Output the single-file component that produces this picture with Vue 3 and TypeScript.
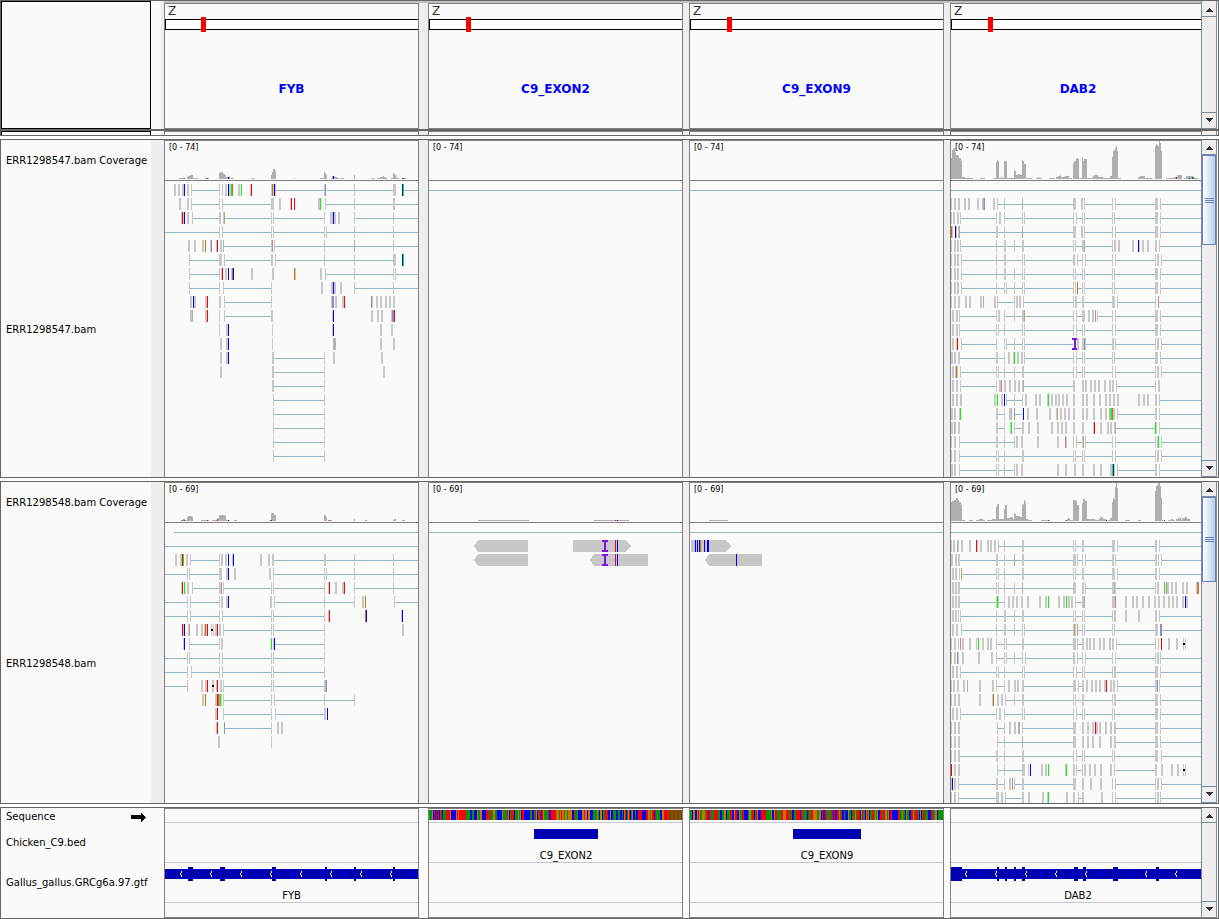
<script setup lang="ts">
interface Shape { d: string; fill: string }
interface AlignmentTrack { coverage: string; reads: string[] }
interface Sample { name: string; range: string; height: number; thumb: string; tracks: AlignmentTrack[] }
interface Gene { exons: string; white: number[]; blue: number[] }
interface Locus { name: string; width: number; marker: number; seed: number; bed?: [number, number]; gene?: Gene }

const palette: Record<string, string> = {
  r: '#ff0000', b: '#0000ff', g: '#00ff00', G: '#009600', o: '#d17105',
  R: '#d08484', p: '#8c8cc8', O: '#c4a27c', e: '#a4c0a4', E: '#8ccc8c', d: '#b0b0b0', k: '#000000',
}

const loci: Locus[] = [
  { name: 'FYB', width: 253, marker: 36, seed: 0,
    gene: { exons: '23.5 55.5 107.4 160.2 189.2 228.2', white: [15, 45, 75, 105, 135, 165, 195, 225], blue: [0, 127, 157, 178, 206, 246] } },
  { name: 'C9_EXON2', width: 253, marker: 37, seed: 7, bed: [105, 64] },
  { name: 'C9_EXON9', width: 253, marker: 37, seed: 23, bed: [103, 68] },
  { name: 'DAB2', width: 250, marker: 37, seed: 0,
    gene: { exons: '0.11 46.2 54.2 63.2 71.3 123.4 132.3 162.5 205.3', white: [14, 44, 74, 104, 134, 194, 224], blue: [26, 89, 120, 151, 182] } },
]

const blank: AlignmentTrack = { coverage: '', reads: ['0~253'] }
const spliced = '108 109~159 159'
const through = '54 57 58~106 106 108 109~159 159'

const samples: Sample[] = [
  {
    name: 'ERR1298547.bam', range: '[0 - 74]', height: 296, thumb: 'long',
    tracks: [
      {
        coverage: '14.6.1 19.1.1G 22.1.2 23.2.3 25.3.4 28.5.1 40.4.1 42.1.1r 54.1.6 55.3.7 58.2.5 60.1.4 61.4.2 63.1.2b 65.3.1 67.1.1o 86.4.1 106.1.4 107.1.7 108.2.10 110.1.8 129.1.1 155.4.1 159.1.7 160.1.6 161.1.4 166.1.1 167.3.3 170.2.2 168.1.3b 172.2.1 175.4.1 189.1.4 206.4.1 212.3.1 215.3.2 218.1.3 219.2.2 221.1.1 226.2.1 228.1.6 229.1.5 230.1.4 231.1.2 232.2.1 237.4.1 237.1.1b 238.1.1G',
        reads: [
          '9.2 13.2 17.2 19b 22.2 26 27~54 54 57 60.2 63b 64.2 66g 67o 73.2 76g 85 86r 106 107o 108 109b 110 111~159 159 160p 161~189 189 190~228 228.3 237b 238g 239~253',
          '14.2 22.2 26 27~54 54 57 58~106 106.3 114.2 125 126r 129r 153.2 155g 160 161~189 189 190~228 228.2 230~253',
          '16 17r 18 19b 22.2 27 28~54 54.2 58 59O 60~106 106 108 109~159 159 165.2 167 168b 169.2 173.2 189 190~228 228 229~253',
          '0~54 54 57 58~106 106 108 109~159 159 161 162~189 189 190~228 228 229~253',
          '23.2 29.2 37.2 40o 45 46p 51 52r 55.2 58e 59~106 106 107R 109 110~159 159 160~189 189d 190~228 228 229~253',
          '24 25~54 54.3 59 60~106 106.2 110 111~159 159 160~189 189 190~228 228.3 237b 238g',
          '24 25~54 54 56 57r 60.2 63b 66 67o 68b 86.2 107.2 129o 130 155.2 160 161~189 189 190~228 228 230 231~253',
          '24 25~54 54 58 59~106 106 156.2 166.2 168b 169.2 175.2 189 190~228 228 229~253',
          '25.2 28b 29.2 40.2 42r 54.2 59 60~106 106 166 167.2p 170.2 177.2 179r 206p 207 211.2 215.2 220.2 224.2 228.2',
          '25.2 27d 40.2 42r 54 59 60~106 106.2 167 168b 206.2 212.2 216.2 226 227.2p 229r',
          '54 61.2 63b 107 167 168b 215.2 226.2',
          '55.2 61.2 63b 107 168d 169.2e 215.2 228.2',
          '55.2 61.2 63b 107.2 109~159 159 168.2 216.2',
          '55.2 107.2 109~159 159 218.2',
          '107.2 109~159 159',
          spliced, spliced, spliced, spliced, spliced,
        ],
      },
      blank,
      blank,
      {
        coverage: '0.1.21 1.1.29 2.2.31 4.1.27 5.2.24 7.1.23 8.2.21 10.1.18 11.3.2 14.8.1 29.5.1 43.2.1 45.1.17 46.1.19 47.1.18 48.2.1 50.1.2 51.2.1 53.3.18 56.7.1 60.1.1o 63.1.9 64.1.8 65.2.4 67.2.5 69.2.4 71.1.19 72.1.18 73.2.15 76.5.1 85.6.1 87.1.2 98.6.1 105.2.2 107.2.3 109.1.4 110.4.2 114.4.3 118.3.1 122.1.16 123.2.18 125.2.21 127.1.20 128.3.1 131.1.22 132.1.18 133.3.20 136.6.1 142.1.3 143.4.4 147.5.2 152.7.1 159.2.3 161.1.22 162.1.28 163.1.29 164.1.31 165.1.33 166.1.28 167.3.1 187.2.2 189.5.3 194.7.1 196.1.1o 204.1.33 205.1.35 206.1.34 207.1.33 208.1.38 209.1.36 210.1.28 215.8.1 223.3.2 225.1.2r 226.5.4 233.2.1 235.7.3 238.1.1b 241.2.2G 243.4.1',
        reads: [
          '0~250',
          '0 3.2 7.2 13.2 17.2 26.2 31 32d 33p 42.2 46 47~122 53 71d 122.3 130.2 133 134~161 161 164 165~204 204.3 209 210~250',
          '0 2.2 6.2 9 10~45 45 48.2 53 54~71 71 73 74~122 122 125 126~131 131 133 134~161 161 163 164~204 204.3 209 210~250',
          '0o 1 4b 5 7 8O 9~45 45.2 47~122 53 71d 122.3 130.2 133 134~161 161 164 165~204 204.3 209 210~250',
          '0 3.2 6.2 9 10~45 45 46~53 53.2 55~71 63 71.2 73~122 122 124 125~131 131.2 133d 134~161 161 163.2 167.2 181.2 187b 188 191.2 196.2 204.2 208 209~250',
          '0 3.2 6.2 10 11~45 45 46~53 53.2 55~71 71 73 74~122 122.2 126 127~131 131 134 135~161 161 164 165~204 204 206.2 210 211~250',
          '0 3.2 6.2 10 11~45 45 46~53 53.2 55~71 63 71 73 74~122 122 124 125~131 131 133 134~161 161 163 164~204 204.3 209 210~250',
          '0 3.2 6.2 10 11~45 45 46~53 53 55 56~71 63 71 73 74~122 122 124 126o 127~131 131 133 134~161 161 163 164~204 204.3 209 210~250',
          '0 3.2 7.2 14.2 18.2 29.2 32d 43.2 46 47~63 63 65.2 68.2 72 73~122 122 124.2 126~131 131.2 133~161 161.3 166 167~204 204 207R 208~250',
          '1.2 5.2 8 9~45 45 47.2 53 54~71 63 71.2 73O 74~122 122 125 126~131 131.3 137.2 141.2 144R 146 147~161 161 164 165~204 204.3 209 210~250',
          '1.2 5.2 8 9~45 45 47 48~53 53 54~71 71 73 74~122 122 125 126~131 131 133 134~161 161 164 165~204 204.3 209 210~250',
          '1.2 5 6r 10 11~45 45 53 55 56~71 63 71 73 74~122 121I 126.2 131.2 133p 134 135~161 161.2 164 165~204 204 206.2 210 211~250',
          '0.2 3.2 7.2 9~45 45.2 47~53 53 57.2 62 63g 66.2 70.2 73 74~122 122 125 126~131 131 133 134~161 161 163 164~204 204.3 209 210~250',
          '1.2 4 5o 6 9 10~45 45 47 48~53 53 54~71 63 71.2 73~122 122 125 126~131 131 133 134~161 161 164 165~204 204 206.2 210 211~250',
          '1.2 5.2 9 10~45 45 48.2 50R 53.2 58.2 63.2 67.2 71 72d 73~122 122.2 131.2 134.2 139.2 143.2 147.2 153.2 158.2 161.2 165 166~204 204 207.2',
          '1.2 5.2 9.2 43.2 46g 50.2 53b 55 56~71 63 71 74.2 84.2 88.2 96 97g 100.2 104.2 107.2 111.2 115.2 122.2 131.2 135.2 142.2 148.2 154.2 158.2 162.2 166.2 187.2 192.2 196.2 204.2 208 209~250',
          '0.2 3.2 8 9g 45.2 47~53 53 58.2 60d 63p 64~71 72b 76.2 85.2 98.2 105 106O 109.2 113.2 117.2 122.2 131.2 135.2 142.2 149.2 154.2 158.2e 160g 161o 162.2 166 167~204 204.2 208 209~250',
          '0.2 3d 4 7.2 45.2 47~53 53 59 60g 63 64~71 71.2 77.2 86.2 100.2 106.2 110.2 114.2 122.2 131.2 142 143r 149.2 156.2 159.2 163 164d 165~204 204g 205 208 209~250',
          '0 3.2 8 9~45 45.2 47~53 53 54~63 63 65.2 70.2 86.2 106.2 114R 115 122 125 126~131 131 132O 134 135~161 161 164 165~204 204 206 207g 210 211~250',
          '0 3.2 8 9~45 45 47 48~53 53 54~71 71.2 73~122 122 124 125~131 131 133 134~161 161 164 165~204 204 206.2 210 211~250',
          '0.2 3.2 8 9~45 45 47 48~53 53 54~63 63 65.2 70.2 106.2 114.2 123.2 131.2 142.2 149.2 159.2 161g 162b 163 166 167~204 204.2 208 209~250',
        ],
      },
    ],
  },
  {
    name: 'ERR1298548.bam', range: '[0 - 69]', height: 280, thumb: 'short',
    tracks: [
      {
        coverage: '16.3.1 17.1.1r 18.2.2 19.1.1G 20.2.1 22.1.4 23.4.5 27.1.4 36.8.1 42.1.1r 47.5.1 52.1.2r 53.1.3 54.6.6 60.1.5 61.4.1 63.1.1b 69.3.1 104.2.1 106.3.8 106.1.1b 109.2.6 159.2.6 161.1.4 163.4.1 164.1.1r 189.1.2 200.2.1O 228.1.1 229.2.2 237.3.1',
        reads: [
          '9~253',
          '0~253',
          '10.2 15.2 17r 18g 21.2 25 26~54 54 56.2 60.2 63b 67 68b 95.2 103.2 107.2 109~253 159.2 189 228',
          '0~22 22 24 25~54 54.3 61.2 63b 69.2 104.2 108 109~253 159 161 189 228',
          '16 17r 19g 22.2 27 28~54 54.2 56R 58 59~106 106 108 109~159 159 163 164r 170.2 177.2 179r 189 190~253 228',
          '0~22 22 25 26~54 54 56.2 61.2 63b 105.2 109 110~189 159 189 197.2 200o 229 230~253',
          '0~22 22 25 26~54 ' + through + ' 163 164r 200o 201b 236 237b',
          '17r 18 19b 23 24O 31.2 36.2 39 40o 41 42r 46 48 46k 50.2 52r 54.2 58 59~106 106 108 109~159 159 237.2',
          '18 19b 24 25~54 54 56.2 106g 108 109b 110~159 159',
          '0~22 22 24 25~54 ' + through,
          '0~22 22 26 27~54 ' + through,
          '0~22 22 36.2 40.2 42r 47.2 47k 51 52r 55.2 58 59~106 106 108 109~159 159 160d 161p',
          '37.2 40o 50.2 52r 53o 54O 55g 56 58 59~106 106 109 110~189 159 189',
          '50.2 52r 58 59~106 106 110 111~159 159.2 162b',
          '51 52r 59p 60~106 106 112.2 116.2',
          '53.2 106',
        ],
      },
      { coverage: '49.51.1 165.35.1 186.1.1r 188.1.1b', reads: ['0~253', '45<99 144>202 173I 186r 188b', '45<99 161<219 173I 186r 188b'] },
      { coverage: '19.19.1', reads: ['0~253', '1>41 5b 7b 9b 10o 14b 17.2b', '15<72 46b'] },
      {
        coverage: '0.1.19 1.2.20 3.2.21 5.2.23 7.1.21 8.2.19 10.1.16 11.3.1 18.4.1 25.3.1 28.4.2 32.2.1 36.5.1 41.4.2 45.1.14 46.2.17 48.5.2 53.1.12 54.2.16 56.3.3 59.3.4 62.1.2 63.1.8 64.1.7 65.4.5 69.2.4 71.1.16 72.1.17 73.1.21 74.1.19 75.2.2 77.4.1 90.9.1 97.1.1G 114.1.1 115.1.1G 116.1.2 117.2.3 119.3.1 122.3.21 125.1.20 126.2.16 131.1.18 132.2.22 134.2.20 136.8.2 144.4.1 148.2.3 150.2.4 152.3.2 155.1.1b 157.2.1 159.2.3 161.1.19 162.1.23 163.1.22 164.1.34 165.1.38 166.1.33 174.5.1 187.3.1 204.1.30 205.1.35 206.1.36 207.2.38 209.1.35 210.1.23 211.1.1 213.1.1b 217.7.1 220.2.2 225.2.2 227.3.3 230.1.1 231.3.3 234.2.4 236.3.2',
        reads: [
          '0~250',
          '0 2.2 6E 7 10.2 18.2 25r 26 29.2 36.2 39.2 43.2 47 48~122 53 71.2 122 124 125~131 131.2 133~161 161.3 166 167~204 204.2 208 209~250',
          '0.2 4.2 7.2 9~45 45.2 47~53 53 54~71 63d 71.2 73~122 122.3 126 127~131 131 134 135~161 161.2 164 165~204 204.2 207 210 211~250',
          '1.2 4.2 8 10O 11~45 45 47 48~122 53 71.2 122 124 125~131 131.2 133~161 161.3 166 167~204 204.2 208 209~250',
          '1.2 4.2 7.2 9~45 45 47 48~122 53 63 71d 122.3 131.2 134 135~161 161.2 163E 164 165~204 204 206.2 213g 215R 216.2 220.2 224.2 231.2 235.2 245 246R 247o',
          '1.2 4.2 7.2 9~45 45 46.2g 47 48~53 53 57.2 61.2 65.2 70.2 76.2 88.2 94.2 97g 107.2 112.2 115g 117.2 120.2 124 125~131 131.2 133O 161.3 164R 174.2 181.2 185.2 191.2 197.2 203.2 207.2 212.2 217.2 221.2 225.2 231.2 234b 235.2',
          '1.2 4.2 7 9 10~45 45 46~53 53.2 55~71 63 71.2 73~122 122 124 125~131 131 133 134~161 161 163.2 174.2 187.2 204.2 208 209~250',
          '1.2 5.2 10 11~45 45 46~53 53.2 55~71 63 71 73 74~122 122 123O 124 126O 127~131 131 133 134~161 161 163 164~204 204.3 209.2p 211~250',
          '0 3.2 7 9R 11.2 18.2 25 27g 31.2 36.2 39.2 45 46~53 53 55 56~71 71.2 73~122 122.3 126 127~131 131.2 135.2 138.2 142.2 148.2 152.2 158.2 161.2 165 166~204 204 207 210r 217.2 225.2 232 234 232k',
          '0 3.2 6p 7 11.2 27.2 40.2 45 46~53 53 55 56~71 63 71 74 75~122 122.2 126 127~131 131 134 135~161 161 164 165~204 204 206.2 209 210~250',
          '1.2 5.2 9 10~45 45 47 48~71 53 71 73 74~122 122 125 126~131 131 133 134~161 161 163.2 165~204 204.3 209 210~250',
          '0 2.2 6.2 12.2 16d 28.2 41.2 45 46~53 53 57.2 63.2 66.2 71.2 73~122 122.3 127 128~131 131.2 135.2 140.2 144.2 148.2 153.2 155r 159.2 162.2 166 167~204 204.2 206p 208 209~250',
          '0 3.2 7.2 28.2 41 42o 46.2 50.2 54 55~71 63 71.2 73~122 122 124 125~131 131.2 133~161 161 163.2 165~204 204.3 209 210~250',
          '1.2 5.2 9 10~45 45 48.2 53 54~71 71 73 74~122 122 125 126~131 131 133 134~161 161 163 164~204 204.3 209 210~250',
          '0 3.2 7.2 46 47~53 53 58.2 63.2 67d 68O 71 72~122 122.3 131.2 136.2 141.2 144r 145.2 148.2 154.2 159.2 163.2 165~204 204.3 209 210~250',
          '0 3.2 7.2 46 47~122 53 71d 122.3 131.2 136.2 141.2 148.2 159.2 163.2 165~204 204.3 209 210~250',
          '0 3.2 7.2 9~45 45.2 47~71 53 71.2 73~122 122 125 126~131 131 133 134~161 161 163 164~204 204.3 210 211~250',
          '0r 3.2 7.2 46 47~71 53 71.3 77 79b 90.2 94.2 97g 114 115g 122.2 125 126~131 131 133.2 138.2 143.2 149.2 159.2 163 164~204 204.2 210.2 220.2 226.2 232 234 232k',
          '0 1b 3.2 7 8~45 45.2 47~53 53 58.2 61R 63 64~122 71.2 122.3 131.2 139.2 149.2 161 164 165~204 204 206.2 210 211~250',
          '0 3.2 7 8~45 45.3 50.2 54 55~71 71.2 77.2 91.2 96 97g 115.2 122.2 127 128~131 131.2 150.2 161 164 165~204 204 206.2 209 210~250',
        ],
      },
    ],
  },
]

const box = (x: number, y: number, w: number, h: number) => `M${x} ${y}h${w}v${h}h${-w}z`

function coverageShapes(text: string): Shape[] {
  return text.split(' ').filter(Boolean).map((token) => {
    const m = /^(\d+)\.(\d+)\.(\d+)(\w)?$/.exec(token)!
    return { d: box(+m[1], 38 - +m[3], +m[2], +m[3]), fill: m[4] ? palette[m[4]] : '#afafaf' }
  })
}

function readShapes(rows: string[]): Shape[] {
  const links: Shape[] = []
  const bars: Shape[] = []
  rows.forEach((row, i) => {
    const y = 3 + i * 14
    for (const token of row.split(' ')) {
      const m = /^(\d+)(?:([~<>])(\d+)|\.(\d+))?([a-zA-Z])?$/.exec(token)!
      const x = +m[1]
      const end = +m[3]
      if (m[2] === '~') links.push({ d: box(x, y + 6, end - x, 1), fill: '#94b5c5' })
      else if (m[2] === '<') bars.push({ d: `M${x} ${y + 6}L${x + 4} ${y}H${end}V${y + 12}H${x + 4}z`, fill: '#c8c8c8' })
      else if (m[2] === '>') bars.push({ d: `M${x} ${y}H${end - 5}L${end} ${y + 6}L${end - 5} ${y + 12}H${x}z`, fill: '#c8c8c8' })
      else if (m[5] === 'I') bars.push({ d: box(x, y, 6, 2) + box(x + 2, y, 2, 12) + box(x, y + 10, 6, 2), fill: '#7a16dc' })
      else if (m[5] === 'k') bars.push({ d: box(x, y + 5, 2, 2), fill: '#000000' })
      else bars.push({ d: box(x, y, +(m[4] ?? 1), 12), fill: m[5] ? palette[m[5]] : '#c8c8c8' })
    }
  })
  return [...links, ...bars]
}

function sequenceShapes(seed: number): Shape[] {
  if (!seed) return []
  const colors = ['#ff0000', '#0000ff', '#009600', '#d17105', '#ff0000', '#0000ff', '#009600']
  const out: Shape[] = []
  let state = seed
  for (let x = 0; x < 253;) {
    state = (state * 1103515245 + 12345) % 2147483648
    const w = 1 + ((state >> 8) % 5 > 2 ? 1 : 0)
    out.push({ d: box(x, 1, w, 10), fill: colors[(state >> 16) % 7] })
    x += w
  }
  return out
}

function geneShapes(gene: Gene, width: number): Shape[] {
  const exons = gene.exons.split(' ').map((t) => t.split('.').map(Number))
  return [
    { d: box(0, 6, width, 10), fill: '#0000b2' },
    ...exons.map(([x, w]) => ({ d: box(x, 4, w, 14), fill: '#0000b2' })),
  ]
}

const chevron = (x: number) => `M${x + 2} 8.5l-2 2.5l2 2.5`

// Shifts a centred label so that its middle falls on the feature's middle.
const labelShift = (bed: [number, number], width: number) =>
  `${((2 * bed[0] + bed[1] - width) / width) * 100}%`

const view = samples.map((s) => ({
  ...s,
  panels: s.tracks.map((t, i) => ({ width: loci[i].width, coverage: coverageShapes(t.coverage), reads: readShapes(t.reads) })),
}))
const features = loci.map((l) => ({
  ...l,
  sequence: sequenceShapes(l.seed),
  body: l.gene ? geneShapes(l.gene, l.width) : [],
}))
const upArrow = 'M3 0h1v1h1v1h1v1h1v1h-7v-1h1v-1h1v-1h1z'
const downArrow = 'M0 0h7v1h-1v1h-1v1h-1v1h-1v-1h-1v-1h-1v-1h-1z'
</script>

<template>
  <main class="browser">
    <header class="frame head">
      <div class="names corner"></div>
      <div class="attrs"></div>
      <div class="panels">
        <section v-for="l in loci" :key="l.name" class="panel">
          <div class="chrom">Z</div>
          <svg class="ideogram" :viewBox="`0 0 ${l.width} 15`" preserveAspectRatio="none" aria-hidden="true">
            <path :d="`M0 2h${l.width}v11h${-l.width}z`" fill="#000" />
            <path :d="`M1 3h${l.width}v9h${-l.width}z`" fill="#fff" />
            <path :d="`M${l.marker} 0h5v15h-5z`" fill="#f00" />
          </svg>
          <h2 class="locus">{{ l.name }}</h2>
        </section>
      </div>
      <div class="scroll">
        <button class="up" type="button" aria-label="Scroll up"><svg viewBox="0 0 7 4"><path :d="upArrow" /></svg></button>
        <button class="down" type="button" aria-label="Scroll down"><svg viewBox="0 0 7 4"><path :d="downArrow" /></svg></button>
      </div>
    </header>
    <div class="frame strip">
      <div class="names corner"></div>
      <div class="attrs"></div>
      <div class="panels">
        <div v-for="l in loci" :key="l.name" class="panel"></div>
      </div>
      <div class="scroll"></div>
    </div>

    <section v-for="s in view" :key="s.name" class="frame data">
      <div class="names">
        <div class="name coverage-name">{{ s.name }} Coverage</div>
        <div class="name fill">{{ s.name }}</div>
      </div>
      <div class="attrs"></div>
      <div class="panels">
        <div v-for="(p, i) in s.panels" :key="i" class="panel">
          <div class="coverage">
            <svg :viewBox="`0 0 ${p.width} 39`" preserveAspectRatio="none" aria-hidden="true">
              <path v-for="(c, k) in p.coverage" :key="k" :d="c.d" :fill="c.fill" />
            </svg>
            <span class="range">{{ s.range }}</span>
          </div>
          <svg class="reads" :viewBox="`0 0 ${p.width} ${s.height}`" :style="{ height: s.height + 'px' }" preserveAspectRatio="none" aria-hidden="true">
            <path v-for="(c, k) in p.reads" :key="k" :d="c.d" :fill="c.fill" />
          </svg>
        </div>
      </div>
      <div class="scroll">
        <button class="up" type="button" aria-label="Scroll up"><svg viewBox="0 0 7 4"><path :d="upArrow" /></svg></button>
        <div class="thumb" :class="s.thumb"><i></i><i></i><i></i></div>
        <button class="down" type="button" aria-label="Scroll down"><svg viewBox="0 0 7 4"><path :d="downArrow" /></svg></button>
      </div>
    </section>

    <section class="frame features">
      <div class="names">
        <div class="name sequence-name">
          <span>Sequence</span>
          <svg class="strand" viewBox="0 0 15 9" aria-hidden="true"><path d="M0 2h10v-2h1v1h1v1h1v1h1v1h1v1h-1v1h-1v1h-1v1h-1v1h-1v-3h-10z" /></svg>
        </div>
        <div class="name feature-name">Chicken_C9.bed</div>
        <div class="name feature-name">Gallus_gallus.GRCg6a.97.gtf</div>
      </div>
      <div class="attrs"></div>
      <div class="panels">
        <div v-for="f in features" :key="f.name" class="panel">
          <div class="lane sequence">
            <svg :viewBox="`0 0 ${f.width} 13`" preserveAspectRatio="none" aria-hidden="true">
              <path v-for="(c, k) in f.sequence" :key="k" :d="c.d" :fill="c.fill" />
            </svg>
          </div>
          <div class="lane">
            <template v-if="f.bed">
              <svg :viewBox="`0 0 ${f.width} 24`" preserveAspectRatio="none" aria-hidden="true">
                <rect :x="f.bed[0]" y="6" :width="f.bed[1]" height="10" fill="#0000b2" />
              </svg>
              <span class="label" :style="{ marginLeft: labelShift(f.bed, f.width) }">{{ f.name }}</span>
            </template>
          </div>
          <div class="lane">
            <template v-if="f.gene">
              <svg :viewBox="`0 0 ${f.width} 24`" preserveAspectRatio="none" aria-hidden="true">
                <path v-for="(c, k) in f.body" :key="k" :d="c.d" :fill="c.fill" />
                <path v-for="x in f.gene.blue" :key="'b' + x" :d="chevron(x)" fill="none" stroke="#0000ff" />
                <path v-for="x in f.gene.white" :key="'w' + x" :d="chevron(x)" fill="none" stroke="#ffffff" />
              </svg>
              <span class="label">{{ f.name }}</span>
            </template>
          </div>
        </div>
      </div>
      <div class="scroll">
        <button class="up" type="button" aria-label="Scroll up"><svg viewBox="0 0 7 4"><path :d="upArrow" /></svg></button>
        <button class="down" type="button" aria-label="Scroll down"><svg viewBox="0 0 7 4"><path :d="downArrow" /></svg></button>
      </div>
    </section>
  </main>
</template>

<style>
body { margin: 0; background: #fdfdfd; }
</style>

<style scoped>
* { box-sizing: border-box; }
.browser { font-family: "DejaVu Sans", Verdana, sans-serif; font-size: 10px; line-height: 12px; color: #000; }
svg { display: block; shape-rendering: crispEdges; }

.frame { display: flex; background: #fafafa; border: 1px solid #666; margin-bottom: 3px; padding-right: 1px; overflow: hidden; }
.names { flex: none; width: 150px; display: flex; flex-direction: column; }
.attrs { flex: none; width: 13px; background: #eee; }
.panels { flex: 1; min-width: 0; display: grid; grid-template-columns: 255fr 9px 255fr 6px 255fr 6px 251fr; background: #eee; }
.panel { min-width: 0; overflow: hidden; background: #fafafa; border: 1px solid #808080; border-bottom: 0; }
.panel:nth-child(1) { grid-column: 1; }
.panel:nth-child(2) { grid-column: 3; }
.panel:nth-child(3) { grid-column: 5; }
.panel:nth-child(4) { grid-column: 7; border-right: 0; }
.panel svg { width: 100%; }

.head { margin-bottom: 0; height: 130px; }
.corner { border: 1px solid #000; }
.head .attrs, .strip .attrs { background: #fafafa; border-right: 3px solid #eee; }
.head .panels { border-top: 2px solid #c0c0c0; }
.head .panel { border-bottom: 1px solid #808080; }
.chrom { height: 13px; padding-left: 3px; font-size: 12px; line-height: 15px; color: #333; }
.ideogram { height: 15px; }
.locus { margin: 49px 0 0; font-size: 12px; line-height: 16px; font-weight: bold; color: #0000ff; text-align: center; }
.panel:nth-child(4) .locus, .panel:nth-child(4) .label { padding-left: 4px; }
.strip { height: 6px; }
.strip .corner { border-bottom: 0; }

.name { display: flex; align-items: center; padding-left: 5px; white-space: nowrap; }
.coverage-name { height: 41px; }
.fill { flex: 1; padding-top: 2px; }
.sequence-name { height: 15px; padding: 3px 5px 0; justify-content: space-between; }
.strand { width: 15px; height: 9px; }
.feature-name { height: 40px; }

.coverage { position: relative; height: 40px; border-bottom: 1px solid #808080; }
.coverage svg { height: 39px; }
.range { position: absolute; left: 4px; top: 1px; font-size: 8px; }

.features { margin-bottom: 0; }
.features .attrs, .features .panels { background: #fafafa; }
.features .panel { height: 110px; border-bottom: 1px solid #808080; }
.lane { height: 40px; border-bottom: 1px solid #c6c6ce; }
.lane svg { height: 24px; }
.sequence { height: 14px; }
.lane.sequence svg { height: 13px; }
.label { display: block; line-height: 18px; text-align: center; }

.scroll { flex: none; width: 16px; display: flex; flex-direction: column; background: #eee; border: solid #7a8a99; border-width: 0 1px; }
.scroll button { flex: none; width: 14px; height: 15px; padding: 0; border: 0; background: #eee; display: flex; align-items: center; justify-content: center; }
.scroll button svg { width: 7px; height: 4px; fill: #333; }
.scroll .up { padding-top: 2px; border-bottom: 1px solid #7a8a99; }
.scroll .down { margin-top: auto; height: 17px; padding-bottom: 2px; border: solid #7a8a99; border-width: 1px 0; }
.head .scroll { padding-top: 1px; }
.thumb { display: flex; flex-direction: column; align-items: center; justify-content: center; gap: 1px; border: 1px solid #6382bf; background: linear-gradient(to right, #fff, #b8cfe5); }
.thumb i { width: 9px; height: 1px; background: #6382bf; }
.long { height: 90px; }
.short { height: 85px; }
</style>
